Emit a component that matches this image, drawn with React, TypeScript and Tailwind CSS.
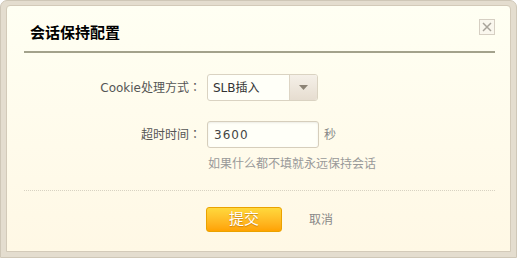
import React from "react";

export default function App() {
  const font = {
    fontFamily: '"DejaVu Sans", "Noto Sans CJK SC", sans-serif',
  } as React.CSSProperties;
  return (
    <div
      className="w-[517px] h-[258px] bg-[#e4ddcf] border border-[#cfc7b7] rounded-t-[7px] pt-[4px] px-[5px] pb-[5px]"
      style={font}
    >
      <div className="h-full border border-[#d3cab9] rounded-t-[4px] bg-gradient-to-b from-[#fffff3] to-[#fff8e5] pl-[17px] pr-[15px]">
        <div className="flex justify-between border-b-2 border-[#a3a28c] pt-[17px] pb-[8px]">
          <div className="pl-[6px] h-[20px] leading-[20px] text-[15px] font-bold text-black">
            会话保持配置
          </div>
          <div className="mt-[-4px] w-[16px] h-[16px] border border-[#d6cfc3] bg-[#faf7ee] flex items-center justify-center">
            <svg width="10" height="10" viewBox="0 0 10 10">
              <path d="M1 1 L9 9 M9 1 L1 9" stroke="#a8a39a" strokeWidth="1.5" />
            </svg>
          </div>
        </div>

        <div className="flex items-center mt-[21px] text-[12px]">
          <div className="w-[177px] text-right text-[#555]">
            Cookie处理方式<span className="font-['Noto_Sans_CJK_JP']">：</span>
          </div>
          <div className="ml-[6px] w-[111px] h-[27px] border border-[#dad3c2] rounded-[3px] bg-[#fffff8] flex items-stretch overflow-hidden">
            <div className="flex-1 flex items-center pl-[5px] text-[#333]">SLB插入</div>
            <div className="w-[28px] border-l border-[#ddd5c5] bg-gradient-to-b from-[#f5f0e8] to-[#e6ddd0] flex items-center justify-center">
              <svg width="9" height="5" viewBox="0 0 9 5">
                <path d="M0 0 L9 0 L4.5 5 Z" fill="#8c8375" />
              </svg>
            </div>
          </div>
        </div>

        <div className="flex items-center mt-[20px] text-[12px]">
          <div className="w-[177px] text-right text-[#555]">
            超时时间<span className="font-['Noto_Sans_CJK_JP']">：</span>
          </div>
          <div className="ml-[6px] w-[112px] h-[27px] border border-[#d6cebc] rounded-[3px] bg-[#fffff8] shadow-[inset_0_1px_2px_rgba(0,0,0,0.08)] flex items-center pl-[6px] text-[#444] tracking-[1px]">
            3600
          </div>
          <div className="ml-[5px] text-[#888]">秒</div>
        </div>

        <div className="ml-[184px] mt-[7px] h-[18px] leading-[18px] text-[12px] text-[#999]">
          如果什么都不填就永远保持会话
        </div>

        <div className="mt-[17px] border-t border-dotted border-[#d8d2c2]"></div>

        <div className="flex items-center mt-[16px] ml-[182px]">
          <div className="w-[76px] h-[25px] rounded-[3px] border border-[#eaa200] bg-gradient-to-b from-[#ffd83c] to-[#ffa200] flex items-center justify-center text-white text-[15px] [text-shadow:0_1px_1px_rgba(170,100,0,0.6)]">
            提交
          </div>
          <div className="ml-[27px] text-[12px] text-[#888]">取消</div>
        </div>
      </div>
    </div>
  );
}
